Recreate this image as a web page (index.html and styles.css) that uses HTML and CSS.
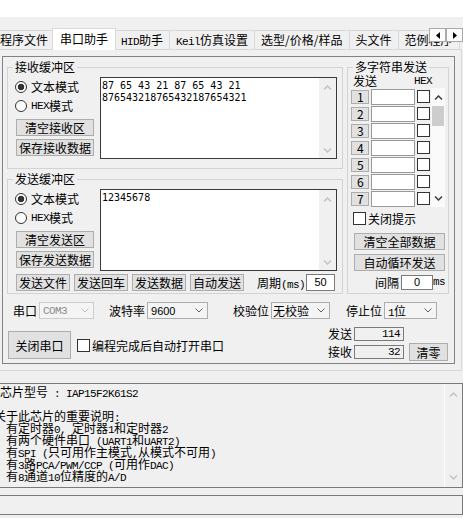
FILE: index.html
```html
<!DOCTYPE html>
<html lang="zh-CN">
<head>
    <meta charset="UTF-8">
    <title>串口助手</title>
    <link rel="stylesheet" href="styles.css">
</head>
<body>
<div class="topbar"></div>
<div class="app">
    <div class="tabs">
        <div class="tab">程序文件</div>
        <div class="tab active">串口助手</div>
        <div class="tab"><span class="en">HID</span>助手</div>
        <div class="tab"><span class="en">Keil</span>仿真设置</div>
        <div class="tab">选型/价格/样品</div>
        <div class="tab">头文件</div>
        <div class="tab">范例程序</div>
        <div class="tab-scroll">
            <span class="tab-arrow"><svg width="4" height="7" viewBox="0 0 4 7"><path d="M4 0L0 3.5L4 7Z"/></svg></span>
            <span class="tab-arrow"><svg width="4" height="7" viewBox="0 0 4 7"><path d="M0 0L4 3.5L0 7Z"/></svg></span>
        </div>
    </div>

    <div class="page">
        <div class="frame">
            <div class="top-area">
                <div class="buffers">
                    <fieldset class="group">
                        <legend>接收缓冲区</legend>
                        <div class="buf-body">
                            <div class="buf-side">
                                <div class="radio checked"><span class="dot"></span>文本模式</div>
                                <div class="radio"><span class="dot"></span><span class="en">HEX</span>模式</div>
                                <button class="btn side-btn">清空接收区</button>
                                <button class="btn side-btn">保存接收数据</button>
                            </div>
                            <div class="memo">
                                <div class="memo-text">87 65 43 21 87 65 43 21
876543218765432187654321</div>
                                <div class="vscroll">
                                    <svg class="chev" width="9" height="5" viewBox="0 0 9 5"><path d="M1 4.5L4.5 1L8 4.5"/></svg>
                                    <svg class="chev" width="9" height="5" viewBox="0 0 9 5"><path d="M1 0.5L4.5 4L8 0.5"/></svg>
                                </div>
                            </div>
                        </div>
                    </fieldset>

                    <fieldset class="group send">
                        <legend>发送缓冲区</legend>
                        <div class="buf-body">
                            <div class="buf-side">
                                <div class="radio checked"><span class="dot"></span>文本模式</div>
                                <div class="radio"><span class="dot"></span><span class="en">HEX</span>模式</div>
                                <button class="btn side-btn">清空发送区</button>
                                <button class="btn side-btn">保存发送数据</button>
                            </div>
                            <div class="memo">
                                <div class="memo-text">12345678</div>
                                <div class="vscroll">
                                    <svg class="chev" width="9" height="5" viewBox="0 0 9 5"><path d="M1 4.5L4.5 1L8 4.5"/></svg>
                                    <svg class="chev" width="9" height="5" viewBox="0 0 9 5"><path d="M1 0.5L4.5 4L8 0.5"/></svg>
                                </div>
                            </div>
                        </div>
                        <div class="send-row">
                            <button class="btn">发送文件</button>
                            <button class="btn">发送回车</button>
                            <button class="btn">发送数据</button>
                            <button class="btn">自动发送</button>
                            <span class="period">周期<span class="en">(ms)</span></span>
                            <span class="field small-field">50</span>
                        </div>
                    </fieldset>
                </div>

                <fieldset class="group multi">
                    <legend>多字符串发送</legend>
                    <div class="multi-head">
                        <span class="head-send">发送</span>
                        <span class="en">HEX</span>
                    </div>
                    <div class="multi-list">
                        <div class="multi-rows">
                            <div class="mrow"><button class="btn num en">1</button><span class="minput"></span><span class="check"></span></div>
                            <div class="mrow"><button class="btn num en">2</button><span class="minput"></span><span class="check"></span></div>
                            <div class="mrow"><button class="btn num en">3</button><span class="minput"></span><span class="check"></span></div>
                            <div class="mrow"><button class="btn num en">4</button><span class="minput"></span><span class="check"></span></div>
                            <div class="mrow"><button class="btn num en">5</button><span class="minput"></span><span class="check"></span></div>
                            <div class="mrow"><button class="btn num en">6</button><span class="minput"></span><span class="check"></span></div>
                            <div class="mrow"><button class="btn num en">7</button><span class="minput"></span><span class="check"></span></div>
                        </div>
                        <div class="mscroll">
                            <svg class="chev dark" width="9" height="5" viewBox="0 0 9 5"><path d="M1 4.5L4.5 1L8 4.5"/></svg>
                            <span class="thumb"></span>
                            <svg class="chev dark down" width="9" height="5" viewBox="0 0 9 5"><path d="M1 0.5L4.5 4L8 0.5"/></svg>
                        </div>
                    </div>
                    <div class="check-line tip"><span class="check"></span>关闭提示</div>
                    <button class="btn wide-btn first">清空全部数据</button>
                    <button class="btn wide-btn">自动循环发送</button>
                    <div class="interval">
                        <span>间隔</span>
                        <span class="field interval-field">0</span>
                        <span class="en">ms</span>
                    </div>
                </fieldset>
            </div>

            <div class="port-row">
                <div class="port-field">
                    <span>串口</span>
                    <div class="combo disabled combo-port">
                        <span class="en">COM3</span>
                        <svg width="8" height="5" viewBox="0 0 8 5"><path d="M0.5 0.5L4 4L7.5 0.5"/></svg>
                    </div>
                </div>
                <div class="port-field">
                    <span>波特率</span>
                    <div class="combo combo-baud">
                        <span class="num-text">9600</span>
                        <svg width="8" height="5" viewBox="0 0 8 5"><path d="M0.5 0.5L4 4L7.5 0.5"/></svg>
                    </div>
                </div>
                <div class="port-field">
                    <span>校验位</span>
                    <div class="combo combo-parity">
                        <span>无校验</span>
                        <svg width="8" height="5" viewBox="0 0 8 5"><path d="M0.5 0.5L4 4L7.5 0.5"/></svg>
                    </div>
                </div>
                <div class="port-field">
                    <span>停止位</span>
                    <div class="combo combo-stop">
                        <span><span class="en">1</span>位</span>
                        <svg width="8" height="5" viewBox="0 0 8 5"><path d="M0.5 0.5L4 4L7.5 0.5"/></svg>
                    </div>
                </div>
            </div>

            <div class="action-row">
                <div class="action-left">
                    <button class="btn close-btn">关闭串口</button>
                    <div class="check-line"><span class="check"></span>编程完成后自动打开串口</div>
                </div>
                <div class="counters">
                    <div class="crow"><span class="clabel">发送</span><span class="count en">114</span></div>
                    <div class="crow second"><span class="clabel">接收</span><span class="count en">32</span><button class="btn clear-btn">清零</button></div>
                </div>
            </div>
        </div>
    </div>

    <div class="info">
        <div class="info-text"><span class="en"> </span>芯片型号<span class="en"> : IAP15F2K61S2</span>
<span class="en"> </span>
关于此芯片的重要说明<span class="en">:</span>
<span class="en">  </span>有定时器<span class="en">0, </span>定时器<span class="en">1</span>和定时器<span class="en">2</span>
<span class="en">  </span>有两个硬件串口<span class="en"> (UART1</span>和<span class="en">UART2)</span>
<span class="en">  </span>有<span class="en">SPI (</span>只可用作主模式<span class="en">,</span>从模式不可用<span class="en">)</span>
<span class="en">  </span>有<span class="en">3</span>路<span class="en">PCA/PWM/CCP (</span>可用作<span class="en">DAC)</span>
<span class="en">  </span>有<span class="en">8</span>通道<span class="en">10</span>位精度的<span class="en">A/D</span></div>
        <div class="vscroll info-scroll">
            <svg class="chev" width="9" height="5" viewBox="0 0 9 5"><path d="M1 4.5L4.5 1L8 4.5"/></svg>
            <svg class="chev" width="9" height="5" viewBox="0 0 9 5"><path d="M1 0.5L4.5 4L8 0.5"/></svg>
        </div>
    </div>
    <div class="status"></div>
</div>
</body>
</html>
```

FILE: styles.css
```css
* {
    box-sizing: border-box;
}

body {
    margin: 0;
    width: 463px;
    height: 518px;
    overflow: hidden;
    background: #fff;
    color: #000;
    font-family: "Noto Sans CJK SC", sans-serif;
    font-size: 12px;
}

.en {
    font-family: "Liberation Mono", monospace;
    font-size: 11px;
    letter-spacing: -0.6px;
}

.topbar {
    height: 17px;
}

.app {
    height: 501px;
    overflow: hidden;
    background: #f0f0f0;
}

/* tabs */
.tabs {
    position: relative;
    display: flex;
    align-items: flex-end;
    height: 21px;
    margin-top: 11px;
    margin-left: -7px;
}

.tab {
    position: relative;
    flex-shrink: 0;
    height: 19px;
    padding: 0 6px;
    margin-right: -1px;
    border: 1px solid #d9d9d9;
    border-bottom: none;
    line-height: 18px;
    white-space: nowrap;
    background: #f0f0f0;
}

.tab.active {
    z-index: 1;
    height: 22px;
    padding: 0 7px;
    margin: 0 -2px -1px -2px;
    line-height: 20px;
    background: #fff;
}

.tab-scroll {
    position: absolute;
    z-index: 2;
    top: 0;
    right: 0;
    display: flex;
    background: #f0f0f0;
}

.tab-arrow {
    display: flex;
    align-items: center;
    justify-content: center;
    width: 17px;
    height: 14px;
    border: 1px solid #a9a9a9;
    background: #fbfbfb;
}

/* tab page */
.page {
    margin: 0 1px 0 -2px;
    padding: 6px 6px 6px 3px;
    border: 1px solid #d9d9d9;
}

.frame {
    padding: 3px 5px 2px 4px;
    border: 1px solid #828282;
}

.top-area {
    display: flex;
    gap: 4px;
}

.buffers {
    width: 336px;
}

.group {
    margin: 0;
    padding: 3px 5px 9px 6px;
    border: 1px solid #d3d3d3;
}

.group legend {
    margin-left: -1px;
    padding: 0 2px;
    line-height: 14px;
}

.group.send {
    margin-top: 3px;
    padding-bottom: 2px;
}

.buf-body {
    display: grid;
    grid-template-columns: 86px 1fr;
}

.buf-side {
    display: flex;
    flex-direction: column;
    align-items: flex-start;
}

.radio {
    display: flex;
    align-items: center;
    height: 19px;
    margin-left: 1px;
}

.dot {
    width: 12px;
    height: 12px;
    margin-right: 4px;
    border: 1px solid #333;
    border-radius: 50%;
    background: #fff;
}

.radio.checked .dot {
    background: radial-gradient(circle, #333 0 3px, #fff 3.6px);
}

.btn {
    padding: 0;
    border: 1px solid #adadad;
    background: #e1e1e1;
    color: #000;
    font-family: "Noto Sans CJK SC", sans-serif;
    font-size: 12px;
    line-height: 15px;
}

.side-btn {
    width: 78px;
    height: 17px;
    margin-left: 2px;
    margin-top: 3px;
}

.radio + .side-btn {
    margin-top: 4px;
}

.memo {
    display: flex;
    height: 82px;
    border: 1px solid #3a3a3a;
    background: #fff;
}

.memo-text {
    flex: 1;
    overflow: hidden;
    padding: 2px 0 0 1px;
    font-family: "DejaVu Sans Mono", monospace;
    font-size: 10px;
    line-height: 12px;
    white-space: pre;
}

.vscroll {
    display: flex;
    flex-direction: column;
    justify-content: space-between;
    align-items: center;
    width: 17px;
    padding: 7px 0 5px;
    background: #f0f0f0;
}

.chev {
    fill: none;
    stroke: #c3c3c3;
    stroke-width: 1.5;
}

.chev.dark {
    stroke: #404040;
}

.send-row {
    display: flex;
    align-items: center;
    height: 17px;
    margin: 3px 0 0 2px;
}

.send-row .btn {
    height: 17px;
    padding: 0 2px;
    margin-right: 4px;
}

.period {
    margin-left: 9px;
}

.field {
    height: 17px;
    border: 1px solid #7a7a7a;
    background: #fff;
    font-family: "Liberation Sans", sans-serif;
    font-size: 11px;
    line-height: 15px;
    text-align: center;
}

.small-field {
    width: 29px;
    margin-left: 1px;
}

/* multi string send */
.multi {
    flex: 1;
    padding: 0 3px 2px 3px;
}

.multi legend {
    margin-left: 2px;
}

.multi-head {
    display: flex;
    height: 14px;
    padding-left: 2px;
    line-height: 14px;
}

.head-send {
    width: 61px;
}

.multi-list {
    display: flex;
}

.multi-rows {
    width: 80px;
}

.mrow {
    display: flex;
    align-items: center;
    height: 17px;
}

.num {
    width: 18px;
    height: 14px;
    margin-right: 2px;
    line-height: 12px;
}

.minput {
    width: 44px;
    height: 16px;
    margin-right: 1px;
    border: 1px solid #9a9a9a;
    background: #fff;
}

.check {
    width: 13px;
    height: 13px;
    border: 1px solid #333;
    background: #fff;
}

.mrow .check {
    margin-left: 1px;
}

.mscroll {
    display: flex;
    flex-direction: column;
    align-items: center;
    width: 14px;
    padding-top: 7px;
    background: #fafafa;
}

.thumb {
    width: 12px;
    height: 20px;
    margin-top: 6px;
    background: #cdcdcd;
}

.mscroll .down {
    margin-top: auto;
    margin-bottom: 6px;
}

.check-line {
    display: flex;
    align-items: center;
    white-space: nowrap;
}

.check-line .check {
    margin-right: 2px;
}

.tip {
    height: 17px;
    margin: 3px 0 0 2px;
}

.wide-btn {
    display: block;
    width: 91px;
    height: 17px;
    margin: 4px 0 0 3px;
}

.wide-btn.first {
    margin-top: 6px;
}

.interval {
    display: flex;
    align-items: center;
    justify-content: flex-end;
    height: 16px;
    margin-top: 3px;
}

.interval-field {
    width: 32px;
    height: 15px;
    margin-left: 2px;
    line-height: 13px;
}

/* port settings */
.port-row {
    display: grid;
    grid-template-columns: 96px 124px 113px auto;
    height: 17px;
    margin: 8px 0 0 6px;
}

.port-field {
    display: flex;
    align-items: center;
}

.combo {
    display: flex;
    align-items: center;
    height: 17px;
    margin-left: 2px;
    padding-left: 3px;
    border: 1px solid #adadad;
    background: #f4f4f4;
}

.combo svg {
    margin-left: auto;
    margin-right: 4px;
    fill: none;
    stroke: #606060;
}

.combo.disabled {
    border-color: #cccccc;
    color: #8a8a8a;
}

.combo.disabled svg {
    stroke: #bfbfbf;
}

.combo-port {
    width: 55px;
}

.combo-baud {
    width: 61px;
}

.combo-parity {
    width: 59px;
    padding-left: 1px;
}

.combo-stop {
    width: 53px;
}

.num-text {
    font-family: "Liberation Sans", sans-serif;
    font-size: 11px;
}

/* close / counters */
.action-row {
    display: flex;
    margin-top: 8px;
}

.action-left {
    display: flex;
    align-items: center;
    height: 28px;
    margin: 4px 0 0 1px;
}

.close-btn {
    width: 63px;
    height: 28px;
    margin-right: 6px;
}

.counters {
    margin: 0 1px 0 auto;
}

.crow {
    display: flex;
    align-items: center;
    height: 14px;
}

.crow.second {
    height: 18px;
    margin-top: 2px;
}

.clabel {
    width: 26px;
    line-height: 14px;
}

.count {
    width: 50px;
    height: 14px;
    padding-right: 3px;
    border: 1px solid #7a7a7a;
    line-height: 12px;
    text-align: right;
}

.clear-btn {
    width: 39px;
    height: 18px;
    margin-left: 5px;
}

/* chip info */
.info {
    display: flex;
    height: 105px;
    margin: 12px 0 0 -8px;
    border: 1px solid #7a7a7a;
}

.info-text {
    flex: 1;
    padding: 2px 0 0 1px;
    line-height: 12px;
    white-space: pre;
    overflow: hidden;
}

.info-text .en {
    line-height: 0;
}

.info-scroll {
    width: 18px;
    padding: 8px 0 7px;
    border-left: 1px solid #fff;
}

.status {
    height: 20px;
    margin: 7px 0 0 -8px;
    border: 1px solid #7a7a7a;
}
```
